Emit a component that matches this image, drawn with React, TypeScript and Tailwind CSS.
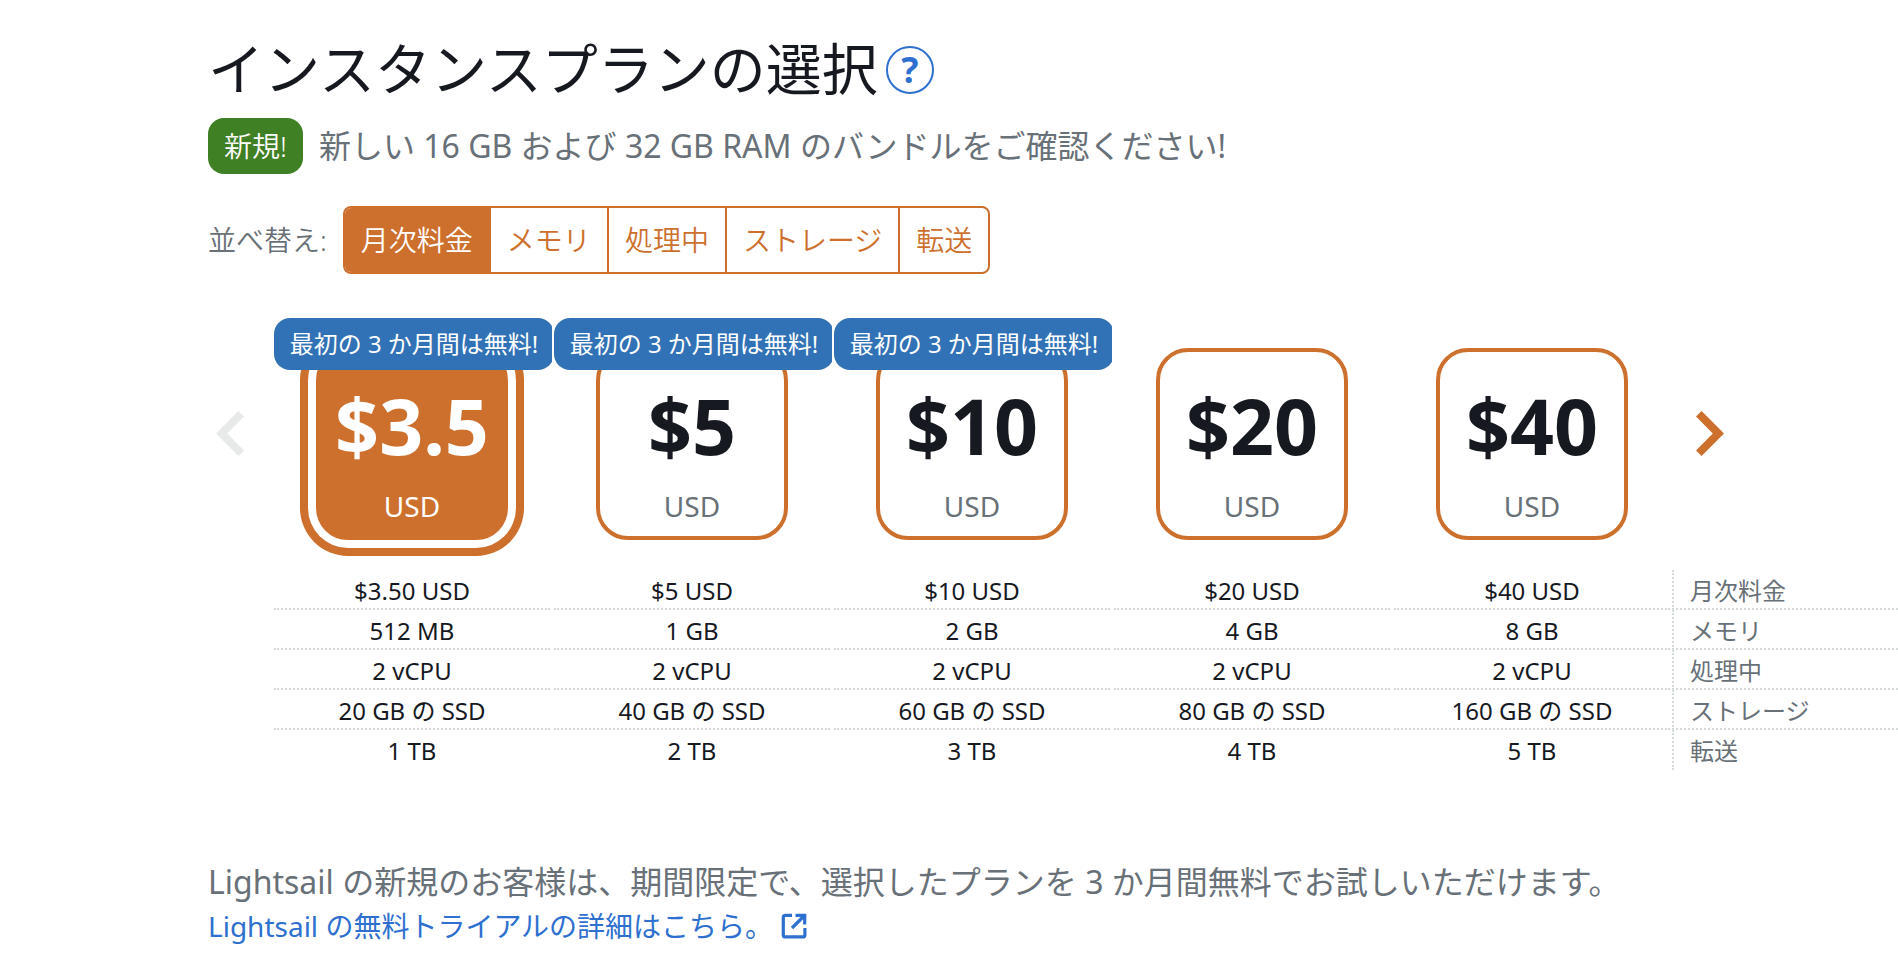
import { useState } from "react"
import clsx from "clsx"

const sortOptions = ["月次料金", "メモリ", "処理中", "ストレージ", "転送"]

const plans = [
  { price: "$3.5", free: true },
  { price: "$5", free: true },
  { price: "$10", free: true },
  { price: "$20", free: false },
  { price: "$40", free: false },
]

const specs = [
  { label: "月次料金", values: ["$3.50 USD", "$5 USD", "$10 USD", "$20 USD", "$40 USD"] },
  { label: "メモリ", values: ["512 MB", "1 GB", "2 GB", "4 GB", "8 GB"] },
  { label: "処理中", values: ["2 vCPU", "2 vCPU", "2 vCPU", "2 vCPU", "2 vCPU"] },
  { label: "ストレージ", values: ["20 GB の SSD", "40 GB の SSD", "60 GB の SSD", "80 GB の SSD", "160 GB の SSD"] },
  { label: "転送", values: ["1 TB", "2 TB", "3 TB", "4 TB", "5 TB"] },
]

function Chevron({ className }: { className?: string }) {
  return (
    <svg viewBox="0 0 28 45" className={clsx("w-7 h-[45px]", className)} fill="currentColor" aria-hidden="true">
      <path d="M22.4 0 28 5.6 11.2 22.5 28 39.4 22.4 45 0 22.5Z" />
    </svg>
  )
}

function ExternalIcon() {
  return (
    <svg viewBox="0 0 26 26" className="w-[26px] h-[26px]" fill="none" stroke="currentColor" strokeWidth="3.2" aria-hidden="true">
      <path d="M11 2.3H4.3a2 2 0 0 0-2 2v17.6a2 2 0 0 0 2 2h17.6a2 2 0 0 0 2-2V15" />
      <path d="M14.5 2.3h9.2v9.2M23.5 2.5 11 15" />
    </svg>
  )
}

export default function App() {
  const [sort, setSort] = useState(0)
  const [selected, setSelected] = useState(0)

  return (
    <main className="min-h-screen overflow-x-hidden bg-white pt-9 pl-52 pb-8 font-['Noto_Sans','Noto_Sans_CJK_JP',sans-serif] text-[#16191f]">
      <div className="flex items-center gap-2">
        <h1 className="text-[56px] leading-[64px]">インスタンスプランの選択</h1>
        <button
          aria-label="ヘルプ"
          className="mt-1 flex h-12 w-12 items-center justify-center rounded-full border-2 border-[#2e70cf] text-[36px] leading-none font-bold text-[#2e70cf]"
        >
          ?
        </button>
      </div>

      <div className="mt-[18px] flex items-center gap-4">
        <span className="rounded-2xl bg-[#3f8024] px-4 text-[28px] leading-[56px] font-[350] text-white">新規!</span>
        <p className="text-[32px] leading-[56px] text-[#687078]">
          新しい 16 GB および 32 GB RAM のバンドルをご確認ください!
        </p>
      </div>

      <div className="mt-8 flex items-center gap-4 text-[28px] font-[350]">
        <span className="text-[#687078]">並べ替え:</span>
        <div className="flex overflow-hidden rounded-lg border-2 border-[#cd702d]">
          {sortOptions.map((option, i) => (
            <button
              key={option}
              onClick={() => setSort(i)}
              aria-pressed={sort === i}
              className={clsx(
                "h-16 border-r-2 border-[#cd702d] px-4 last:border-r-0",
                sort === i ? "bg-[#cd702d] text-white" : "text-[#cd702d]"
              )}
            >
              {option}
            </button>
          ))}
        </div>
      </div>

      <div className="mt-11 flex items-center">
        <button disabled aria-label="前へ" className="w-16 shrink-0 pt-2 pl-2 text-[#e7eae9]">
          <Chevron />
        </button>
        {plans.map((plan, i) => (
          <div key={plan.price} className="relative flex w-[280px] shrink-0 justify-center pt-[30px]">
            {plan.free && (
              <div className="absolute top-0 right-0 left-[2px] z-10 overflow-hidden">
                <div className="w-[280px] rounded-2xl bg-[#3172b7] text-center text-[24px] leading-[52px] whitespace-nowrap text-white">
                  最初の 3 か月間は無料!
                </div>
              </div>
            )}
            <button
              onClick={() => setSelected(i)}
              aria-pressed={selected === i}
              className={clsx(
                "flex h-48 w-48 flex-col items-center rounded-[32px] border-4 border-[#cd702d] pt-8",
                selected === i && "bg-[#cd702d] text-white shadow-[0_0_0_8px_#fff,0_0_0_16px_#cd702d]"
              )}
            >
              <span className="text-[77px] leading-[84px] font-bold">{plan.price}</span>
              <span className={clsx("mt-[18px] text-[28px] leading-10", selected !== i && "text-[#687078]")}>USD</span>
            </button>
          </div>
        ))}
        <button aria-label="次へ" className="shrink-0 pt-2 pl-6 text-[#cd702d]">
          <Chevron className="rotate-180" />
        </button>
      </div>

      <div className="mt-[30px] pl-16">
        <table className="w-full table-fixed text-[24px] leading-[42px]">
          <tbody>
            {specs.map((row) => (
              <tr key={row.label} className="group">
                {row.values.map((value, i) => (
                  <td key={i} className="w-[280px] px-[2px]">
                    <div className="h-10 border-b-2 border-dotted border-[#d5dbdb] text-center group-last:border-b-0">
                      {value}
                    </div>
                  </td>
                ))}
                <th scope="row" className="p-0 text-left font-normal text-[#687078]">
                  <div className="h-10 border-b-2 border-l-2 border-dotted border-[#d5dbdb] pl-4 group-last:border-b-0">
                    {row.label}
                  </div>
                </th>
              </tr>
            ))}
          </tbody>
        </table>
      </div>

      <div className="mt-[90px]">
        <p className="text-[32px] leading-[44px] text-[#687078]">
          Lightsail の新規のお客様は、期間限定で、選択したプランを 3 か月間無料でお試しいただけます。
        </p>
        <a href="#free-trial" className="inline-flex items-center gap-2 text-[28px] leading-[44px] text-[#2e70cf]">
          Lightsail の無料トライアルの詳細はこちら。
          <ExternalIcon />
        </a>
      </div>
    </main>
  )
}
